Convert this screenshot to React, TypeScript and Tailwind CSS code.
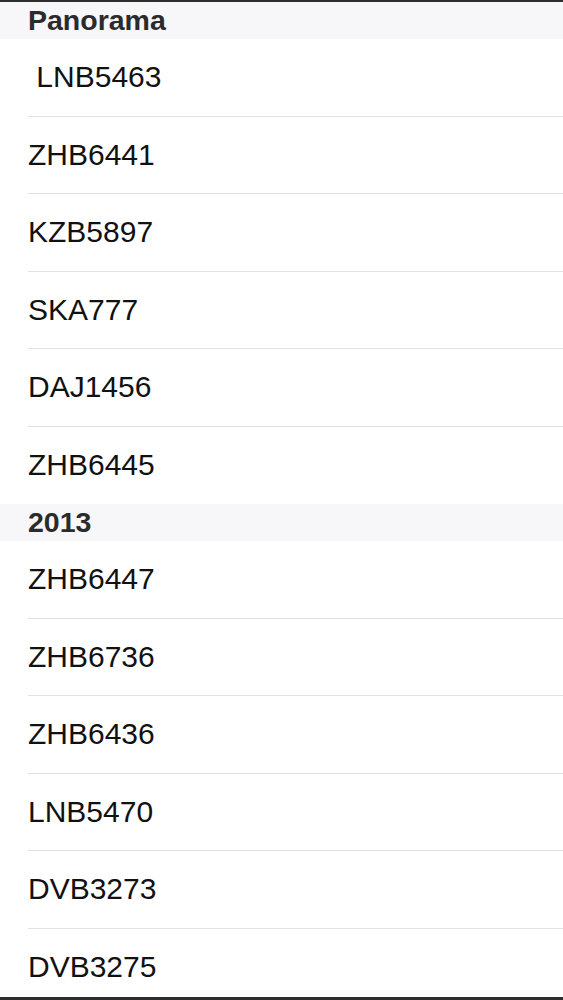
const sections = [
  {
    title: "Panorama",
    items: [" LNB5463", "ZHB6441", "KZB5897", "SKA777", "DAJ1456", "ZHB6445"],
  },
  {
    title: "2013",
    items: ["ZHB6447", "ZHB6736", "ZHB6436", "LNB5470", "DVB3273", "DVB3275"],
  },
];

function SectionHeader({ title }: { title: string }) {
  return (
    <div className="h-[37px] bg-[#f7f6f8] flex items-center px-[28px]">
      <span className="text-[28.5px] font-bold text-[#2b2b2b] leading-none">{title}</span>
    </div>
  );
}

function Row({ label, last }: { label: string; last: boolean }) {
  return (
    <div className="pl-[28px] bg-white">
      <div
        className={`h-[77.5px] flex items-center ${last ? "" : "border-b border-[#e2e2e4]"}`}
      >
        <span className="text-[30px] text-[#111] leading-none whitespace-pre">{label}</span>
      </div>
    </div>
  );
}

export default function App() {
  return (
    <div
      className="w-[563px] h-[1000px] overflow-hidden bg-white flex flex-col border-t-2 border-b-[3px] border-[#2e2e2e]"
      style={{ fontFamily: '"Liberation Sans", Arial, sans-serif' }}
    >
      {sections.map((s) => (
        <div key={s.title}>
          <SectionHeader title={s.title} />
          {s.items.map((item, i) => (
            <Row key={item} label={item} last={i === s.items.length - 1} />
          ))}
        </div>
      ))}
    </div>
  );
}
